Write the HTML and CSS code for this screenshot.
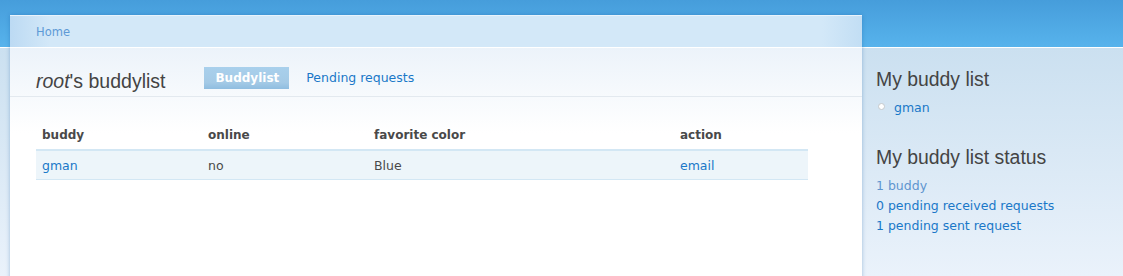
FILE: index.html
```html
<!DOCTYPE html>
<html lang="en">
<head>
  <meta charset="UTF-8" />
  <title>root's buddylist</title>
  <link rel="stylesheet" href="styles.css">
</head>
<body>
  <div class="page">
    <div class="main">
      <div class="breadcrumb"><a href="#">Home</a></div>
      <div class="content">
        <div class="content-head">
          <h2 class="title"><em>root</em>'s buddylist</h2>
          <ul class="tabs">
            <li class="active"><a href="#">Buddylist</a></li>
            <li><a href="#">Pending requests</a></li>
          </ul>
        </div>
        <table class="buddies">
          <colgroup>
            <col style="width:166px"><col style="width:166px"><col style="width:306px"><col>
          </colgroup>
          <thead>
            <tr><th>buddy</th><th>online</th><th>favorite color</th><th>action</th></tr>
          </thead>
          <tbody>
            <tr><td><a href="#">gman</a></td><td>no</td><td>Blue</td><td><a href="#">email</a></td></tr>
          </tbody>
        </table>
      </div>
    </div>
    <div class="sidebar">
      <div class="block">
        <h2>My buddy list</h2>
        <ul class="bullets">
          <li><a href="#">gman</a></li>
        </ul>
      </div>
      <div class="block">
        <h2>My buddy list status</h2>
        <div class="links">
          <a href="#" class="active">1 buddy</a>
          <a href="#">0 pending received requests</a>
          <a href="#">1 pending sent request</a>
        </div>
      </div>
    </div>
  </div>
</body>
</html>
```

FILE: styles.css
```css
body {
  margin: 0;
  font-family: "DejaVu Sans", Verdana, sans-serif;
  font-size: 12.5px;
  color: #494949;
  background:
    linear-gradient(#469ddb, #57b3ec) 0 0 / 100% 47px no-repeat,
    linear-gradient(#fff, #fff) 0 47px / 100% 1px no-repeat,
    linear-gradient(#cbe0f0 48px, #eaf2fb 276px) no-repeat;
  min-height: 276px;
  overflow: hidden;
}
a {
  color: #1a78c8;
  text-decoration: none;
}
.page {
  display: flex;
  align-items: flex-start;
}
.main {
  margin: 15px 0 0 10px;
  width: 852px;
  min-height: 270px;
  background: #fff;
  box-shadow: 0 0 4px rgba(20, 90, 160, 0.35);
}
.breadcrumb {
  height: 31px;
  line-height: 33px;
  padding-left: 26px;
  font-size: 11.5px;
  border-top: 1px solid #e8f3fc;
  background:
    linear-gradient(90deg, #bcdaf3, #d3e8f8 40px, #d3e8f8 calc(100% - 40px), #c2def4);
}
.breadcrumb a {
  color: #5e9ad6;
}
.content {
  border-top: 1px solid #fff;
  background: linear-gradient(#ecf3fa, #fff 85px) no-repeat;
}
.content-head {
  display: flex;
  align-items: flex-end;
  height: 41px;
  padding: 0 0 7px 26px;
  border-bottom: 1px solid #e3e9ef;
}
.title {
  margin: 0 0 -3px;
  font-family: "Liberation Sans", Arial, sans-serif;
  font-size: 19.5px;
  line-height: 22px;
  font-weight: normal;
  color: #444;
}
.tabs {
  display: flex;
  align-items: center;
  gap: 17px;
  margin: 0 0 0 39px;
  padding: 0;
  list-style: none;
}
.tabs li a {
  display: block;
  height: 22px;
  line-height: 22px;
}
.tabs li.active a {
  padding: 0 10px 0 11px;
  font-size: 12px;
  color: #fff;
  font-weight: bold;
  background: linear-gradient(#a9d0ec, #a4cae6 70%, #8fbde0);
}
.buddies {
  table-layout: fixed;
  width: 772px;
  margin: 23px 0 0 26px;
  border-collapse: collapse;
}
.buddies th {
  height: 29px;
  padding: 0 6px;
  text-align: left;
  font-size: 12px;
  font-weight: bold;
  border-bottom: 2px solid #d3e7f4;
}
.buddies td {
  height: 28px;
  padding: 0 6px;
  background: #edf5fa;
  border-bottom: 1px solid #d3e7f4;
}
.sidebar {
  padding: 68px 0 0 14px;
}
.sidebar h2 {
  margin: 0;
  font-family: "Liberation Sans", Arial, sans-serif;
  font-size: 19.4px;
  line-height: 22px;
  font-weight: normal;
  color: #444;
}
.block + .block {
  margin-top: 29px;
}
.bullets {
  margin: 9px 0 0;
  padding: 0;
  list-style: none;
}
.bullets li {
  display: flex;
  align-items: center;
  gap: 9px;
  padding-left: 2px;
  line-height: 18px;
}
.bullets li::before {
  content: "";
  width: 5px;
  height: 5px;
  border: 1px solid #c5c9cc;
  border-radius: 50%;
  background: #fff;
  margin-top: -3px;
}
.links {
  display: flex;
  flex-direction: column;
  margin-top: 8px;
  line-height: 20px;
}
.links a.active {
  color: #5e95cf;
}
```
